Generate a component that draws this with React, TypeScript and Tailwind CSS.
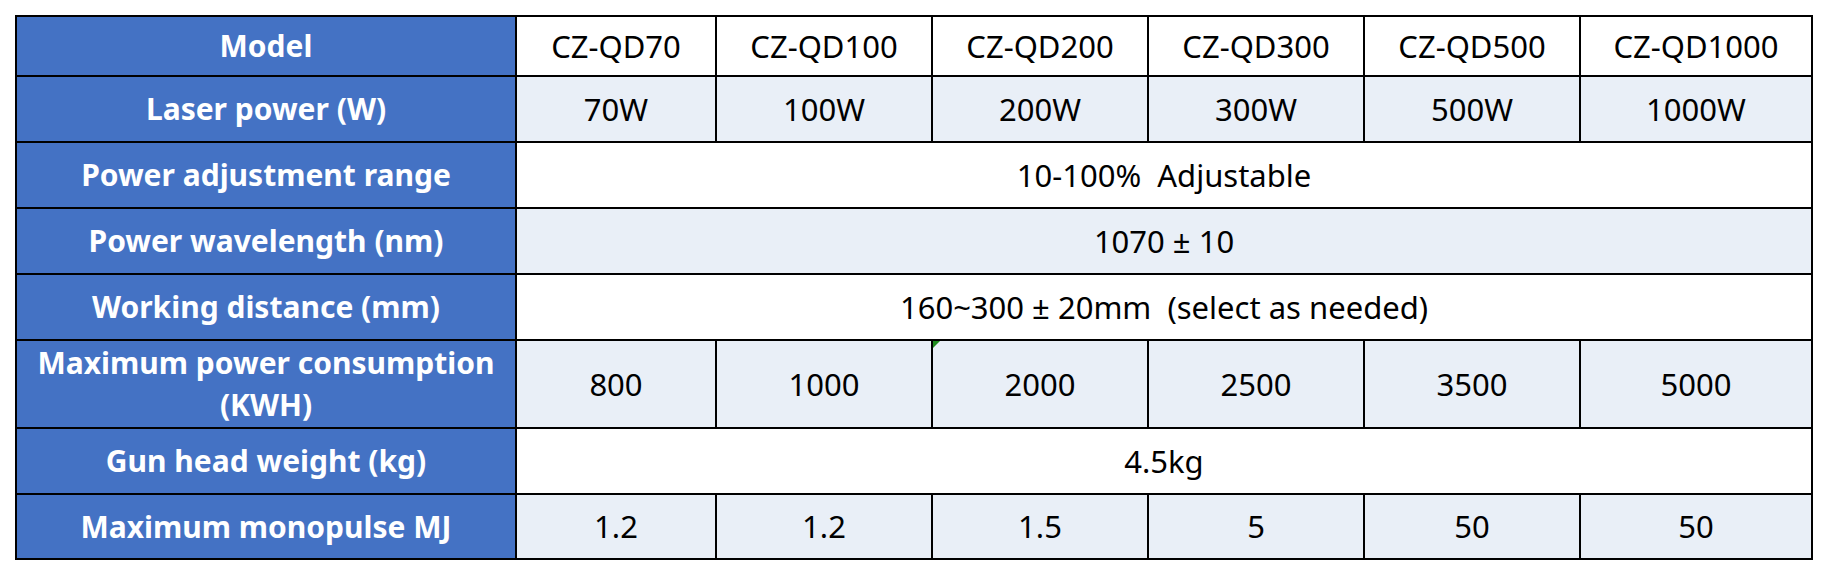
import type { ReactNode } from 'react'

const models = ['CZ-QD70', 'CZ-QD100', 'CZ-QD200', 'CZ-QD300', 'CZ-QD500', 'CZ-QD1000']
const powers = ['70W', '100W', '200W', '300W', '500W', '1000W']
const consumption = ['800', '1000', '2000', '2500', '3500', '5000']
const monopulse = ['1.2', '1.2', '1.5', '5', '50', '50']

const font = { fontFamily: '"Noto Sans", "Open Sans", sans-serif' }

function Label({ children }: { children: ReactNode }) {
  return (
    <div className="flex items-center justify-center bg-[#4472c4] text-center text-[30px] leading-[42px] font-bold text-white">
      {children}
    </div>
  )
}

function Cell({ children, shade, span, marker }: { children: ReactNode; shade?: boolean; span?: boolean; marker?: boolean }) {
  return (
    <div
      className={
        'relative flex items-center justify-center text-[31px] text-black ' +
        (shade ? 'bg-[#e9eff7] ' : 'bg-white ') +
        (span ? 'col-span-6' : '')
      }
    >
      {marker ? (
        <span className="absolute top-0 left-0 h-0 w-0 border-t-[7px] border-r-[7px] border-t-[#1f8a1f] border-r-transparent" />
      ) : null}
      {children}
    </div>
  )
}

export default function App() {
  return (
    <div className="h-[576px] w-[1828px] bg-white pt-[15px] pl-[15px]" style={font}>
      <div className="inline-grid grid-cols-[498px_198px_214px_214px_214px_214px_230px] grid-rows-[58px_64px_64px_64px_64px_86px_64px_63px] gap-[2px] bg-black p-[2px]">
        <Label>Model</Label>
        {models.map((m) => (
          <Cell key={m}>{m}</Cell>
        ))}

        <Label>Laser power (W)</Label>
        {powers.map((p) => (
          <Cell key={p} shade>
            {p}
          </Cell>
        ))}

        <Label>Power adjustment range</Label>
        <Cell span>10-100%&nbsp;&nbsp;Adjustable</Cell>

        <Label>Power wavelength (nm)</Label>
        <Cell span shade>
          1070 ± 10
        </Cell>

        <Label>Working distance (mm)</Label>
        <Cell span>160~300 ± 20mm&nbsp;&nbsp;(select as needed)</Cell>

        <Label>
          Maximum power consumption
          <br />
          (KWH)
        </Label>
        {consumption.map((c, i) => (
          <Cell key={i} shade marker={i === 2}>
            {c}
          </Cell>
        ))}

        <Label>Gun head weight (kg)</Label>
        <Cell span>4.5kg</Cell>

        <Label>Maximum monopulse MJ</Label>
        {monopulse.map((v, i) => (
          <Cell key={i} shade>
            {v}
          </Cell>
        ))}
      </div>
    </div>
  )
}
